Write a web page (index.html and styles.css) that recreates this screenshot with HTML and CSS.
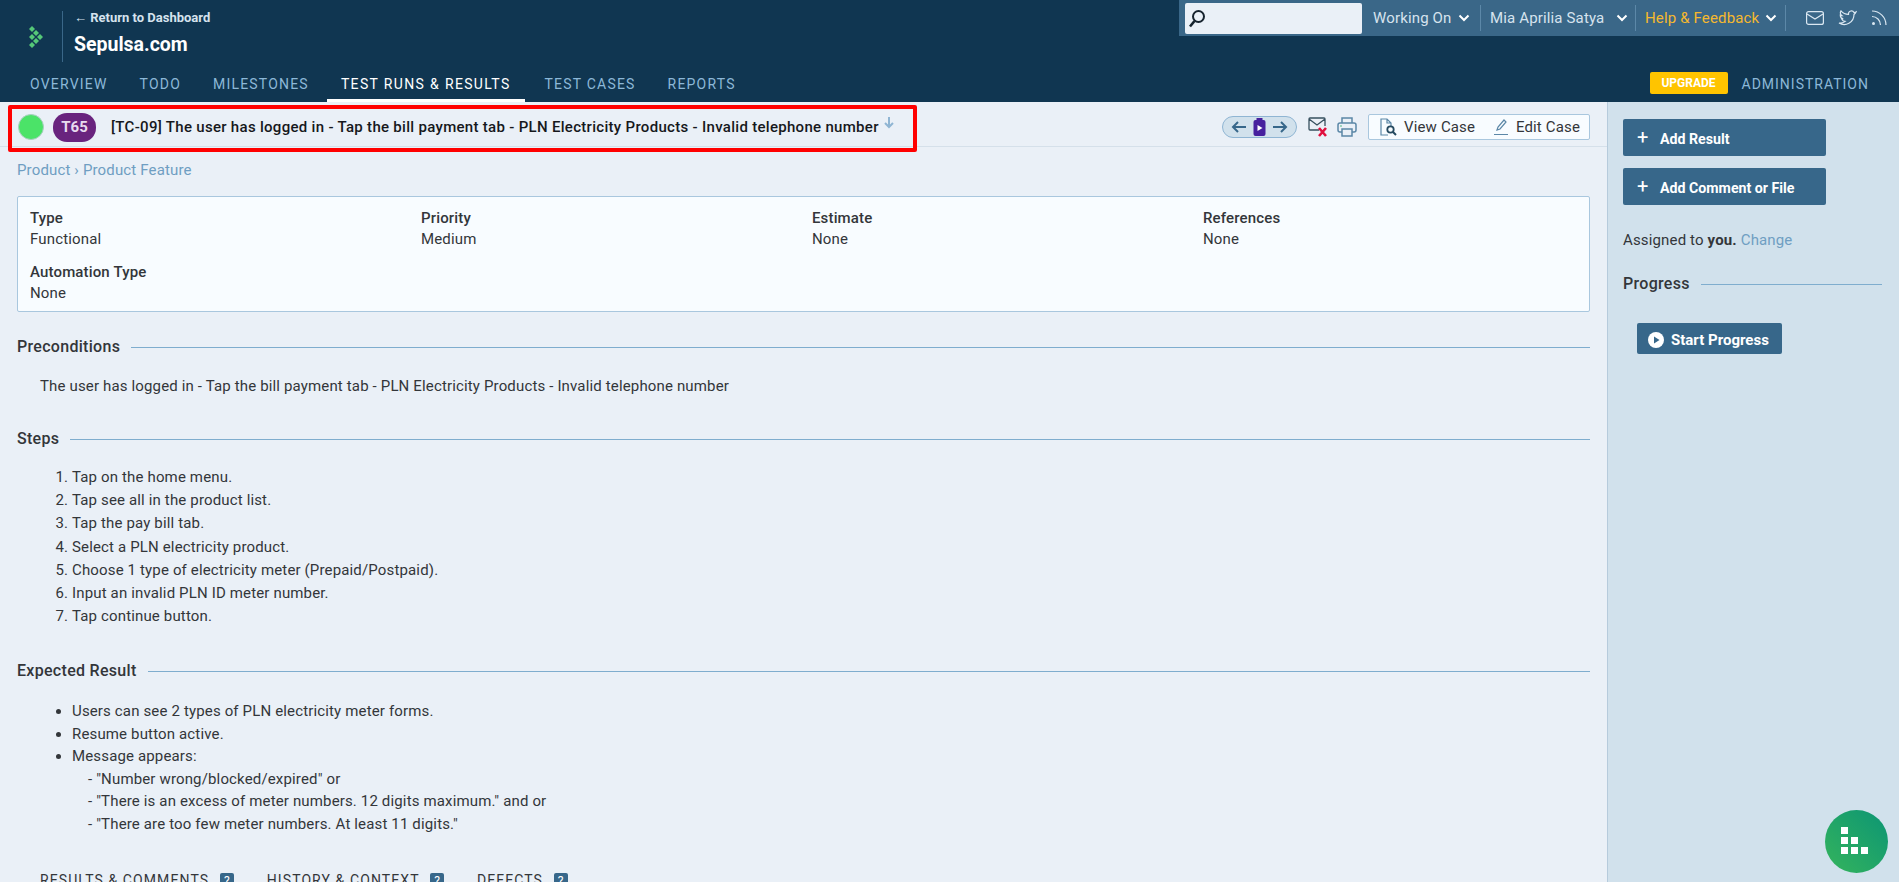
FILE: index.html

```html
<!DOCTYPE html>
<html lang="en">
<head>
  <meta charset="UTF-8" />
  <meta name="viewport" content="width=device-width, initial-scale=1.0"/>
  <title>Sepulsa.com</title>
  <link rel="stylesheet" href="styles.css">
</head>
<body>
  <header class="header">
    <div class="header-top">
      <div class="brand">
        <svg class="logo" width="14" height="22" viewBox="0 0 14 22">
          <g fill="#55c878">
            <path d="M3 0l3 3-3 3-3-3z"/><path d="M7 4l3 3-3 3-3-3z"/><path d="M3 8l3 3-3 3-3-3z"/>
            <path d="M11 8l3 3-3 3-3-3z"/><path d="M7 12l3 3-3 3-3-3z"/><path d="M3 16l3 3-3 3-3-3z"/>
          </g>
        </svg>
        <div class="brand-text">
          <a class="back">← Return to Dashboard</a>
          <div class="project">Sepulsa.com</div>
        </div>
      </div>
      <div class="toolbar">
        <div class="search">
          <svg width="18" height="20" viewBox="0 0 18 20" fill="none" stroke="#16232e" stroke-width="2"><circle cx="10.5" cy="7.5" r="5.5"/><path d="M6.5 12L2 17.5" stroke-width="2.6"/></svg>
        </div>
        <a class="tool tool-first">Working On <svg class="chev" width="12" height="8" viewBox="0 0 12 8"><path d="M1.5 1.5L6 6l4.5-4.5" fill="none" stroke="#fff" stroke-width="2"/></svg></a>
        <a class="tool tool-user">Mia Aprilia Satya <svg class="chev" width="12" height="8" viewBox="0 0 12 8"><path d="M1.5 1.5L6 6l4.5-4.5" fill="none" stroke="#fff" stroke-width="2"/></svg></a>
        <a class="tool tool-help">Help &amp; Feedback <svg class="chev" width="12" height="8" viewBox="0 0 12 8"><path d="M1.5 1.5L6 6l4.5-4.5" fill="none" stroke="#fff" stroke-width="2"/></svg></a>
        <div class="tool-icons">
          <svg width="18" height="14" viewBox="0 0 18 14" fill="none" stroke="#dbe8f2" stroke-width="1.2"><rect x="0.6" y="0.6" width="16.8" height="12.8" rx="2"/><path d="M1 3l8 5 8-5"/></svg>
          <svg width="19" height="16" viewBox="0 0 19 16" fill="none" stroke="#dbe8f2" stroke-width="1.2"><path d="M18 2c-.7.4-1.3.5-2 .6-.6-1.2-2-1.9-3.2-1.6-1.6.4-2.5 1.700-2.300 3.400C7.500 4.300 4.800 3 3 .9c-1 1.700-.5 3.700 1 4.800-.6 0-1.200-.2-1.700-.5 0 1.800 1.200 3.200 2.900 3.600-.5.1-1.100.2-1.600.1.500 1.400 1.800 2.400 3.300 2.500C5.300 12.600 3.200 13.200 1 13c6.500 4 15-.4 15-8.500.7-.6 1.500-1.400 2-2.500z"/></svg>
          <svg width="16" height="16" viewBox="0 0 16 16" fill="none" stroke="#dbe8f2" stroke-width="1.2"><path d="M1 1c7.700 0 14 6.300 14 14"/><path d="M1 6.500c4.700 0 8.500 3.800 8.500 8.500"/><circle cx="2.500" cy="13.500" r="1.500" fill="#dbe8f2" stroke="none"/></svg>
        </div>
      </div>
    </div>
    <nav class="nav">
      <a>Overview</a>
      <a>Todo</a>
      <a>Milestones</a>
      <a class="active">Test Runs &amp; Results</a>
      <a>Test Cases</a>
      <a>Reports</a>
      <span class="nav-right">
        <span class="upgrade">UPGRADE</span>
        <a class="admin">Administration</a>
      </span>
    </nav>
  </header>

  <div class="page">
    <main class="main">
      <div class="titlebar">
        <span class="status-dot"></span>
        <span class="badge">T65</span>
        <h1 class="title">[TC-09] The user has logged in - Tap the bill payment tab - PLN Electricity Products - Invalid telephone number</h1>
        <svg class="title-arrow" width="10" height="12" viewBox="0 0 10 12" fill="none" stroke="#8fb5d3" stroke-width="2"><path d="M5 0v9M1 6l4 4 4-4"/></svg>
        <div class="actions">
          <div class="pager">
            <svg width="16" height="14" viewBox="0 0 16 14" fill="none" stroke="#37678a" stroke-width="2"><path d="M15 7H2M7 2L2 7l5 5"/></svg>
            <svg width="13" height="18" viewBox="0 0 12 18"><rect y="2" width="12" height="16" rx="2" fill="#46209e"/><rect x="3" width="6" height="3" fill="#46209e"/><path d="M4 7l5 3-5 3z" fill="#fff"/></svg>
            <svg width="16" height="14" viewBox="0 0 16 14" fill="none" stroke="#37678a" stroke-width="2"><path d="M1 7h13M9 2l5 5-5 5"/></svg>
          </div>
          <svg class="icon-mail" width="20" height="20" viewBox="0 0 20 20" fill="none"><path d="M11 13H2a1 1 0 0 1-1-1V2a1 1 0 0 1 1-1h14a1 1 0 0 1 1 1v7M1 2l8 6 8-6" stroke="#37505f" stroke-width="1.300"/><path d="M11 11l7 8M18 11l-7 8" stroke="#e0103f" stroke-width="2.600"/></svg>
          <svg class="icon-print" width="20" height="20" viewBox="0 0 20 20" fill="none" stroke="#5b87a7" stroke-width="1.500"><path d="M5 6V1h10v5"/><rect x="1" y="6" width="18" height="9" rx="2"/><rect x="5" y="12" width="10" height="7" fill="#eaf0f7"/><circle cx="4" cy="9" r=".8" fill="#3fae72" stroke="none"/></svg>
          <div class="case-links">
            <a class="case-link"><svg width="17" height="18" viewBox="0 0 17 18" fill="none" stroke="#5b87a7" stroke-width="1.200"><path d="M8 17H1V1h6l4 4v3M7 1v4h4"/><circle cx="10.500" cy="11.500" r="3.200" stroke="#24495f" stroke-width="1.800"/><path d="M13 14l3 3" stroke="#24495f" stroke-width="2"/></svg>View Case</a>
            <a class="case-link"><svg width="16" height="18" viewBox="0 0 16 18" fill="none" stroke="#5b87a7" stroke-width="1.200"><path d="M4 12l1-3 6-7 2 2-6 7zM1 16.500h14"/></svg>Edit Case</a>
          </div>
        </div>
      </div>

      <div class="content">
        <div class="crumbs"><a>Product</a> › <a>Product Feature</a></div>

        <div class="details">
          <div class="field"><b>Type</b><span>Functional</span></div>
          <div class="field"><b>Priority</b><span>Medium</span></div>
          <div class="field"><b>Estimate</b><span>None</span></div>
          <div class="field"><b>References</b><span>None</span></div>
          <div class="field"><b>Automation Type</b><span>None</span></div>
        </div>

        <h2 class="section section-first">Preconditions</h2>
        <p class="text">The user has logged in - Tap the bill payment tab - PLN Electricity Products - Invalid telephone number</p>

        <h2 class="section section-steps">Steps</h2>
        <ol class="list list-steps">
          <li>Tap on the home menu.</li>
          <li>Tap see all in the product list.</li>
          <li>Tap the pay bill tab.</li>
          <li>Select a PLN electricity product.</li>
          <li>Choose 1 type of electricity meter (Prepaid/Postpaid).</li>
          <li>Input an invalid PLN ID meter number.</li>
          <li>Tap continue button.</li>
        </ol>

        <h2 class="section section-result">Expected Result</h2>
        <ul class="list list-result">
          <li>Users can see 2 types of PLN electricity meter forms.</li>
          <li>Resume button active.</li>
          <li>Message appears:
            <div class="sub">- "Number wrong/blocked/expired" or</div>
            <div class="sub">- "There is an excess of meter numbers. 12 digits maximum." and or</div>
            <div class="sub">- "There are too few meter numbers. At least 11 digits."</div>
          </li>
        </ul>

        <div class="tabs">
          <a class="tab">Results &amp; Comments <span class="count">?</span></a>
          <a class="tab">History &amp; Context <span class="count">?</span></a>
          <a class="tab">Defects <span class="count">?</span></a>
        </div>
      </div>
    </main>

    <aside class="sidebar">
      <a class="btn"><span class="plus">+</span>Add Result</a>
      <a class="btn"><span class="plus">+</span>Add Comment or File</a>
      <p class="assigned">Assigned to <b>you.</b> <a>Change</a></p>
      <h2 class="section section-side">Progress</h2>
      <a class="btn-small">
        <svg width="16" height="16" viewBox="0 0 16 16"><circle cx="8" cy="8" r="8" fill="#fff"/><path d="M6 4.500L11.500 8 6 11.500z" fill="#37678a"/></svg>
        Start Progress
      </a>
    </aside>
  </div>

  <div class="highlight"></div>

  <div class="fab">
    <span></span><i></i><i></i>
    <span></span><span></span><i></i>
    <span></span><span></span><span></span>
  </div>
</body>
</html>
```

FILE: styles.css

```css
html, body {
  height: 100%;
  overflow: hidden;
}
body {
  margin: 0;
  font-family: Roboto, "Liberation Sans", sans-serif;
  font-size: 15px;
  letter-spacing: .15px;
  color: #33363a;
  background: #eaf0f7;
}
a {
  text-decoration: none;
}

.header {
  height: 102px;
  background: #103651;
  color: #fff;
}
.header-top {
  height: 71px;
  display: flex;
  justify-content: space-between;
  align-items: flex-start;
}
.brand {
  display: flex;
  align-items: center;
  padding: 11px 0 0 29px;
}
.logo {
  margin-right: 19px;
}
.brand-text {
  height: 51px;
  border-left: 1px solid #3a6788;
  padding-left: 11px;
}
.back {
  display: block;
  font-size: 13px;
  line-height: 14px;
  font-weight: 700;
  letter-spacing: 0;
  color: #d6e3ee;
}
.project {
  margin-top: 8px;
  font-size: 19.500px;
  line-height: 24px;
  font-weight: 700;
  letter-spacing: 0;
}
.toolbar {
  width: 720px;
  height: 36px;
  background: #3a6788;
  display: flex;
  align-items: center;
  padding-left: 6px;
  box-sizing: border-box;
}
.search {
  width: 177px;
  height: 31px;
  margin-top: 1px;
  background: #eaf0f7;
  border-radius: 2px;
  display: flex;
  align-items: center;
  padding-left: 3px;
  box-sizing: border-box;
}
.tool {
  height: 26px;
  display: flex;
  align-items: center;
  color: #d6e3ee;
  white-space: nowrap;
  border-right: 1px solid #5c88a8;
  box-sizing: border-box;
}
.tool .chev {
  margin-left: 6px;
}
.tool-first {
  width: 119px;
  padding-left: 11px;
}
.tool-user {
  width: 155px;
  padding-left: 9px;
}
.tool-user .chev {
  margin-left: 12px;
}
.tool-help {
  width: 150px;
  padding-left: 9px;
  color: #f5b82e;
}
.tool-icons {
  display: flex;
  align-items: center;
  gap: 14px;
  padding-left: 20px;
}

.nav {
  height: 31px;
  display: flex;
  padding-left: 30px;
  font-size: 14px;
  letter-spacing: 1.200px;
  text-transform: uppercase;
}
.nav a {
  color: #8cb8d8;
  margin-right: 32px;
  line-height: 27px;
}
.nav a.active {
  color: #fff;
  position: relative;
  letter-spacing: 1.350px;
  margin-right: 34px;
}
.nav a.active::after {
  content: "";
  position: absolute;
  left: -14px;
  right: -14px;
  top: 28px;
  height: 3px;
  background: #fff;
}
.nav-right {
  margin-left: auto;
  display: flex;
  align-items: flex-start;
}
.upgrade {
  width: 78px;
  height: 22px;
  margin: 1px 14px 0 0;
  background: #ffc400;
  border-radius: 2px;
  color: #fff;
  font-size: 12px;
  font-weight: 700;
  letter-spacing: 0;
  line-height: 22px;
  text-align: center;
}
.nav a.admin {
  margin-right: 30px;
  letter-spacing: 1px;
}

.page {
  display: grid;
  grid-template-columns: 1607px 1fr;
  height: 780px;
}
.main {
  min-width: 0;
}
.sidebar {
  background: #d1e1ec;
  border-left: 1px solid #b6cbdc;
  padding: 17px 15px 0 15px;
}

.titlebar {
  height: 45px;
  display: flex;
  align-items: center;
  padding: 5px 17px 0 18px;
  box-sizing: border-box;
  border-bottom: 1px solid #d5e0ea;
}
.status-dot {
  width: 26px;
  height: 26px;
  border-radius: 50%;
  background: #4be368;
  border: 1px solid #a9cfc0;
  box-sizing: border-box;
  margin-right: 9px;
}
.badge {
  width: 43px;
  height: 29px;
  margin-top: 2px;
  border-radius: 14px;
  background: #69247e;
  color: #e8dcef;
  font-size: 15px;
  font-weight: 700;
  letter-spacing: 0;
  line-height: 29px;
  text-align: center;
  margin-right: 15px;
}
.title {
  margin: 0;
  font-size: 15px;
  font-weight: 500;
  letter-spacing: .3px;
  color: #16181c;
  white-space: nowrap;
}
.title-arrow {
  margin: -8px 0 0 5px;
}
.actions {
  margin-left: auto;
  display: flex;
  align-items: center;
}
.pager {
  width: 75px;
  height: 22px;
  background: #d1e1ec;
  border: 1px solid #8fb5d3;
  border-radius: 11px;
  box-sizing: border-box;
  display: flex;
  align-items: center;
  justify-content: space-around;
  padding: 0 5px;
}
.icon-mail {
  margin-left: 11px;
}
.icon-print {
  margin-left: 9px;
}
.case-links {
  width: 222px;
  height: 26px;
  margin-left: 11px;
  background: #f8fcff;
  border: 1px solid #a9c7de;
  border-radius: 2px;
  box-sizing: border-box;
  display: flex;
  align-items: center;
  justify-content: space-between;
  padding: 0 9px 0 11px;
}
.case-link {
  display: flex;
  align-items: center;
  gap: 7px;
  color: #33363a;
}

.content {
  padding: 0 17px;
}
.crumbs {
  height: 49px;
  line-height: 46px;
  color: #6f9ec2;
}
.details {
  height: 116px;
  background: #f8fcff;
  border: 1px solid #a9c7de;
  border-radius: 2px;
  box-sizing: border-box;
  display: grid;
  grid-template-columns: repeat(4, 391px);
  grid-auto-rows: 54px;
  padding: 11px 12px 0;
}
.field b {
  display: block;
  font-weight: 500;
  line-height: 21px;
}
.field span {
  display: block;
  line-height: 21px;
}

.section {
  margin: 0;
  display: flex;
  align-items: center;
  gap: 11px;
  font-size: 16px;
  line-height: 20px;
  font-weight: 500;
  letter-spacing: .3px;
  color: #33363a;
}
.section::after {
  content: "";
  flex: 1;
  height: 1px;
  background: #7fadce;
}
.section-first {
  margin-top: 25px;
}
.section-steps {
  margin-top: 33px;
}
.section-result {
  margin-top: 33px;
}
.text {
  margin: 19px 0 0 23px;
  line-height: 20px;
}
.list {
  padding: 0 0 0 55px;
}
.list-steps {
  margin: 17px 0 0;
  line-height: 23.200px;
}
.list-result {
  margin: 19px 0 0;
  line-height: 22.500px;
}
.sub {
  padding-left: 16px;
}

.tabs {
  display: flex;
  margin: 37px 0 0 23px;
  font-size: 14px;
}
.tab {
  margin-right: 33px;
  text-transform: uppercase;
  letter-spacing: 1.100px;
  color: #33363a;
  white-space: nowrap;
}
.count {
  display: inline-block;
  width: 14px;
  height: 16px;
  margin-left: 6px;
  background: #37678a;
  border-radius: 2px;
  color: #fff;
  font-size: 12px;
  line-height: 16px;
  text-align: center;
  letter-spacing: 0;
}

.btn {
  display: flex;
  align-items: center;
  width: 203px;
  height: 37px;
  margin-bottom: 12px;
  padding: 3px 0 0 14px;
  box-sizing: border-box;
  background: #37678a;
  border-radius: 2px;
  color: #fff;
  font-size: 14.200px;
  font-weight: 700;
  letter-spacing: 0;
}
.plus {
  width: 23px;
  font-size: 20px;
  font-weight: 400;
  line-height: 20px;
  margin-top: -5px;
}
.assigned {
  margin: 25px 0 0;
  line-height: 20px;
}
.assigned b {
  font-weight: 700;
}
.assigned a {
  color: #6f9ec2;
}
.section-side {
  margin-top: 24px;
  margin-right: 2px;
}
.btn-small {
  display: flex;
  align-items: center;
  gap: 7px;
  width: 145px;
  height: 31px;
  margin: 29px 0 0 14px;
  padding: 2px 0 0 11px;
  box-sizing: border-box;
  background: #37678a;
  border-radius: 2px;
  color: #fff;
  font-weight: 700;
  letter-spacing: 0;
}

.highlight {
  position: absolute;
  left: 8px;
  top: 105px;
  width: 909px;
  height: 47px;
  border: 4px solid #f00;
  border-radius: 2px;
  box-sizing: border-box;
}
.fab {
  position: fixed;
  left: 1825px;
  top: 810px;
  width: 63px;
  height: 63px;
  border-radius: 50%;
  background: linear-gradient(45deg, #35b45c, #0c9574);
  box-sizing: border-box;
  padding: 17px 16px;
  display: grid;
  grid-template-columns: repeat(3, 7px);
  grid-auto-rows: 7px;
  gap: 3px;
}
.fab span {
  background: #fff;
}
```
